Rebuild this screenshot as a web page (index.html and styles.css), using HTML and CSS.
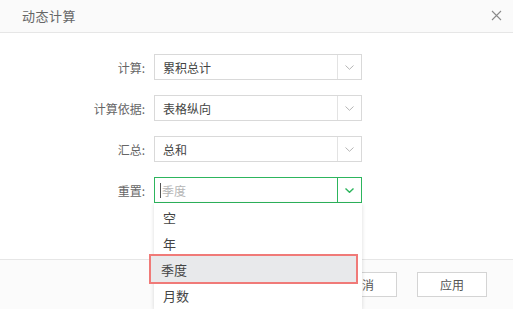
FILE: index.html
```html
<!DOCTYPE html>
<html lang="zh-CN">
  <head>
    <meta charset="UTF-8">
    <title>动态计算</title>
    <link rel="stylesheet" href="styles.css">
  </head>
  <body>
    <div class="dialog">
      <div class="dialog-header">
        <span class="dialog-title">动态计算</span>
        <svg class="close" width="11" height="11" viewBox="0 0 11 11">
          <path d="M1 1L10 10M10 1L1 10" stroke="#8a8a8a" stroke-width="1.1" fill="none"/>
        </svg>
      </div>

      <div class="dialog-body">
        <div class="row">
          <label class="label">计算:</label>
          <div class="select">
            <div class="select-value">累积总计</div>
            <div class="select-arrow">
              <svg width="9" height="5" viewBox="0 0 9 5"><path d="M0.5 0.5L4.5 4.3L8.5 0.5" stroke="#b5b5b5" fill="none"/></svg>
            </div>
          </div>
        </div>
        <div class="row">
          <label class="label">计算依据:</label>
          <div class="select">
            <div class="select-value">表格纵向</div>
            <div class="select-arrow">
              <svg width="9" height="5" viewBox="0 0 9 5"><path d="M0.5 0.5L4.5 4.3L8.5 0.5" stroke="#b5b5b5" fill="none"/></svg>
            </div>
          </div>
        </div>
        <div class="row">
          <label class="label">汇总:</label>
          <div class="select">
            <div class="select-value">总和</div>
            <div class="select-arrow">
              <svg width="9" height="5" viewBox="0 0 9 5"><path d="M0.5 0.5L4.5 4.3L8.5 0.5" stroke="#b5b5b5" fill="none"/></svg>
            </div>
          </div>
        </div>
        <div class="row">
          <label class="label">重置:</label>
          <div class="select active">
            <div class="select-value placeholder"><span class="caret"></span>季度</div>
            <div class="select-arrow">
              <svg width="9" height="5" viewBox="0 0 9 5"><path d="M0.5 0.5L4.5 4.3L8.5 0.5" stroke="#2db55d" stroke-width="1.4" fill="none"/></svg>
            </div>
            <ul class="dropdown">
              <li>空</li>
              <li>年</li>
              <li class="hover">季度</li>
              <li>月数</li>
            </ul>
          </div>
        </div>
      </div>

      <div class="dialog-footer">
        <button class="btn">取消</button>
        <button class="btn">应用</button>
      </div>
    </div>
  </body>
</html>
```

FILE: styles.css
```css
* {
  margin: 0;
  padding: 0;
  box-sizing: border-box;
}

body {
  background: #fff;
  font-family: "Noto Sans CJK SC", "Liberation Sans", sans-serif;
  font-size: 12px;
  color: #444;
}

.dialog {
  width: 513px;
  height: 309px;
  display: flex;
  flex-direction: column;
  overflow: hidden;
}

.dialog-header {
  height: 33px;
  flex: none;
  display: flex;
  align-items: center;
  justify-content: space-between;
  padding: 0 11px 2px 22px;
  background: #fafafa;
  border-bottom: 1px solid #e6e6e6;
}

.dialog-title {
  font-size: 13px;
  color: #666;
  letter-spacing: 0.5px;
}

.dialog-body {
  flex: 1;
  padding-top: 21px;
  display: flex;
  flex-direction: column;
  gap: 15px;
}

.row {
  display: flex;
  align-items: center;
  height: 26px;
}

.label {
  width: 146px;
  text-align: right;
  padding-right: 1px;
  color: #666;
  margin-right: 8px;
}

.select {
  position: relative;
  width: 208px;
  height: 26px;
  display: flex;
  border: 1px solid #d9d9d9;
  background: #fff;
}

.select-value {
  flex: 1;
  display: flex;
  align-items: center;
  padding-left: 8px;
  color: #444;
}

.select-arrow {
  width: 24px;
  flex: none;
  display: flex;
  align-items: center;
  justify-content: center;
  border-left: 1px solid #e3e3e3;
}

.select.active {
  border-color: #2db55d;
}

.select.active .select-arrow {
  border-left-color: #2db55d;
}

.placeholder {
  color: #b5b5b5;
  padding-left: 5px;
}

.caret {
  width: 1px;
  height: 15px;
  background: #555;
  margin-right: 1px;
}

.dropdown {
  position: absolute;
  top: 25px;
  left: -1px;
  width: 208px;
  list-style: none;
  background: #fff;
  padding-top: 2px;
  box-shadow: 0 1px 4px rgba(0, 0, 0, 0.15);
  z-index: 2;
}

.dropdown li {
  height: 26px;
  line-height: 26px;
  padding-left: 9px;
  font-size: 13px;
  color: #444;
}

.dropdown li.hover {
  position: relative;
  top: -2px;
  height: 28px;
  line-height: 30px;
  margin-bottom: -2px;
  background: #e8e9eb;
  margin-left: -4px;
  margin-right: 5px;
  padding-left: 11px;
  outline: 2px solid #f07a78;
  outline-offset: -1px;
}

.dialog-footer {
  height: 50px;
  flex: none;
  display: flex;
  justify-content: flex-end;
  gap: 20px;
  padding: 12px 26px 0 0;
  border-top: 1px solid #e6e6e6;
  background: #fbfbfb;
}

.btn {
  width: 70px;
  height: 25px;
  background: #fff;
  border: 1px solid #d4d4d4;
  font-family: inherit;
  font-size: 12px;
  color: #555;
}
```
